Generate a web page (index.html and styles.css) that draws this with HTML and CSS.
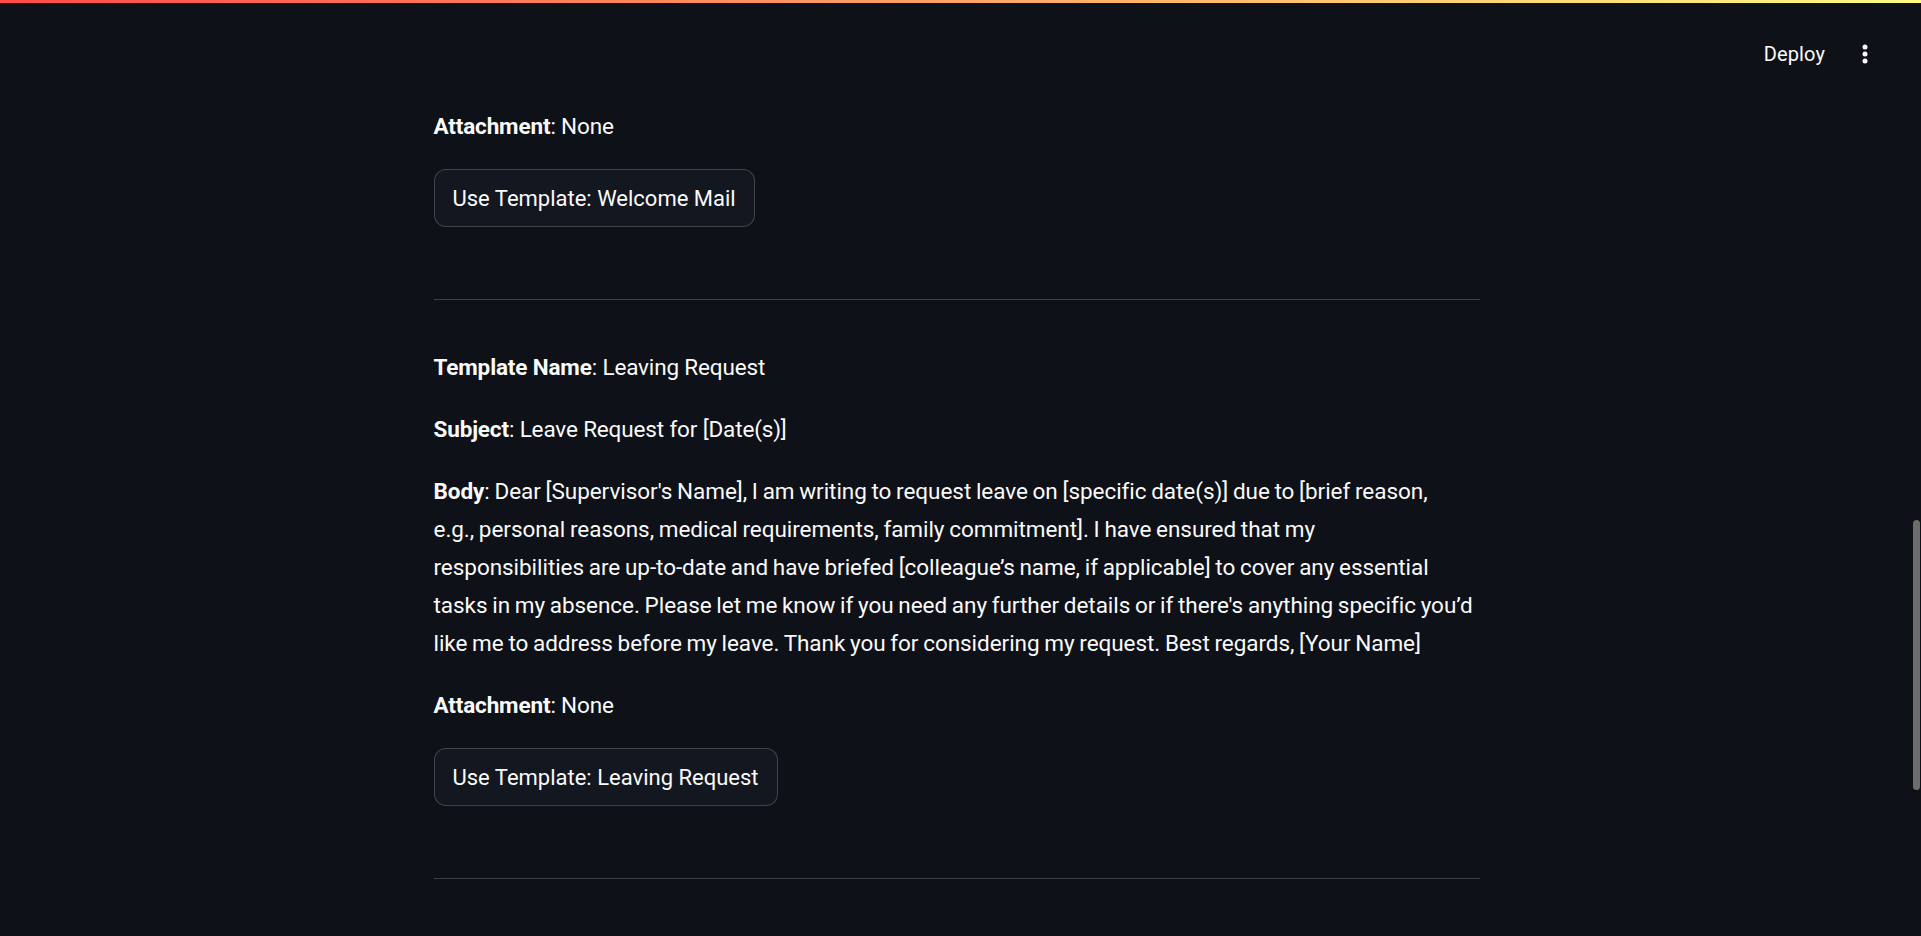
FILE: index.html
```html
<!DOCTYPE html>
<html lang="en">
<head>
<meta charset="utf-8">
<title>Email Templates</title>
<link rel="stylesheet" href="styles.css">
</head>
<body>
<div class="decoration"></div>
<header class="header">
  <div class="toolbar">
    <button class="deploy">Deploy</button>
    <button class="menu" aria-label="Main menu">
      <svg width="6" height="20" viewBox="0 0 6 20"><circle cx="3" cy="3" r="2.5" fill="#fafafa"/><circle cx="3" cy="10" r="2.5" fill="#fafafa"/><circle cx="3" cy="17" r="2.5" fill="#fafafa"/></svg>
    </button>
  </div>
</header>
<main class="main">
  <div class="block">
    <div class="md"><p><strong>Attachment</strong>: None</p></div>
    <div class="btn-row"><button class="btn">Use Template: Welcome Mail</button></div>
    <div class="md"><hr></div>
    <div class="md">
      <p><strong>Template Name</strong>: Leaving Request</p>
      <p><strong>Subject</strong>: Leave Request for [Date(s)]</p>
      <p class="body-text"><strong>Body</strong>: Dear [Supervisor's Name], I am writing to request leave on [specific date(s)] due to [brief reason,<br>e.g., personal reasons, medical requirements, family commitment]. I have ensured that my<br>responsibilities are up-to-date and have briefed [colleague’s name, if applicable] to cover any essential<br>tasks in my absence. Please let me know if you need any further details or if there's anything specific you’d<br>like me to address before my leave. Thank you for considering my request. Best regards, [Your Name]</p>
      <p><strong>Attachment</strong>: None</p>
    </div>
    <div class="btn-row"><button class="btn">Use Template: Leaving Request</button></div>
    <div class="md"><hr></div>
  </div>
</main>
<div class="scroll-thumb"></div>
</body>
</html>
```

FILE: styles.css
```css
html, body {
  margin: 0;
  padding: 0;
  background: #0e1117;
  color: #fafafa;
  font-family: Roboto, "Liberation Sans", sans-serif;
  height: 100%;
  overflow: hidden;
}

.decoration {
  height: 3px;
  background: linear-gradient(90deg, #ff4b4b, #fffd80);
}

.header {
  box-sizing: border-box;
  height: 70px;
  padding-top: 37px;
  padding-right: 53px;
  display: flex;
  justify-content: flex-end;
  align-items: flex-start;
}

.toolbar {
  height: 28px;
  display: flex;
  align-items: center;
  gap: 37px;
}

.deploy {
  background: none;
  border: none;
  color: #fafafa;
  font-family: Roboto, "Liberation Sans", sans-serif;
  font-size: 20px;
  line-height: 28px;
  padding: 0;
  letter-spacing: 0.1px;
}

.menu {
  background: none;
  border: none;
  padding: 0;
  display: flex;
}

.main {
  display: flex;
  justify-content: center;
  padding-right: 8px;
  padding-top: 34px;
}

.block {
  width: 1046px;
  display: flex;
  flex-direction: column;
  gap: 24px;
}

.md {
  margin-bottom: -24px;
}

.md p {
  margin: 0 0 24px 0;
  font-size: 22.5px;
  line-height: 38px;
  letter-spacing: -0.15px;
}

.md p.body-text {
  letter-spacing: -0.05px;
  word-spacing: -0.8px;
  white-space: nowrap;
}

.md strong {
  font-weight: 700;
}

.md hr {
  margin: 48px 0;
  border: none;
  height: 1px;
  background: rgba(250, 250, 250, 0.2);
}

.btn-row {
  display: flex;
}

.btn {
  height: 58px;
  padding: 0 18px;
  background: #131720;
  color: #fafafa;
  border: 1px solid rgba(250, 250, 250, 0.2);
  border-radius: 12px;
  font-family: Roboto, "Liberation Sans", sans-serif;
  font-size: 22px;
  letter-spacing: 0;
}

.scroll-thumb {
  position: fixed;
  right: 1px;
  top: 520px;
  width: 7px;
  height: 270px;
  border-radius: 4px;
  background: #6c6c6c;
}
```
